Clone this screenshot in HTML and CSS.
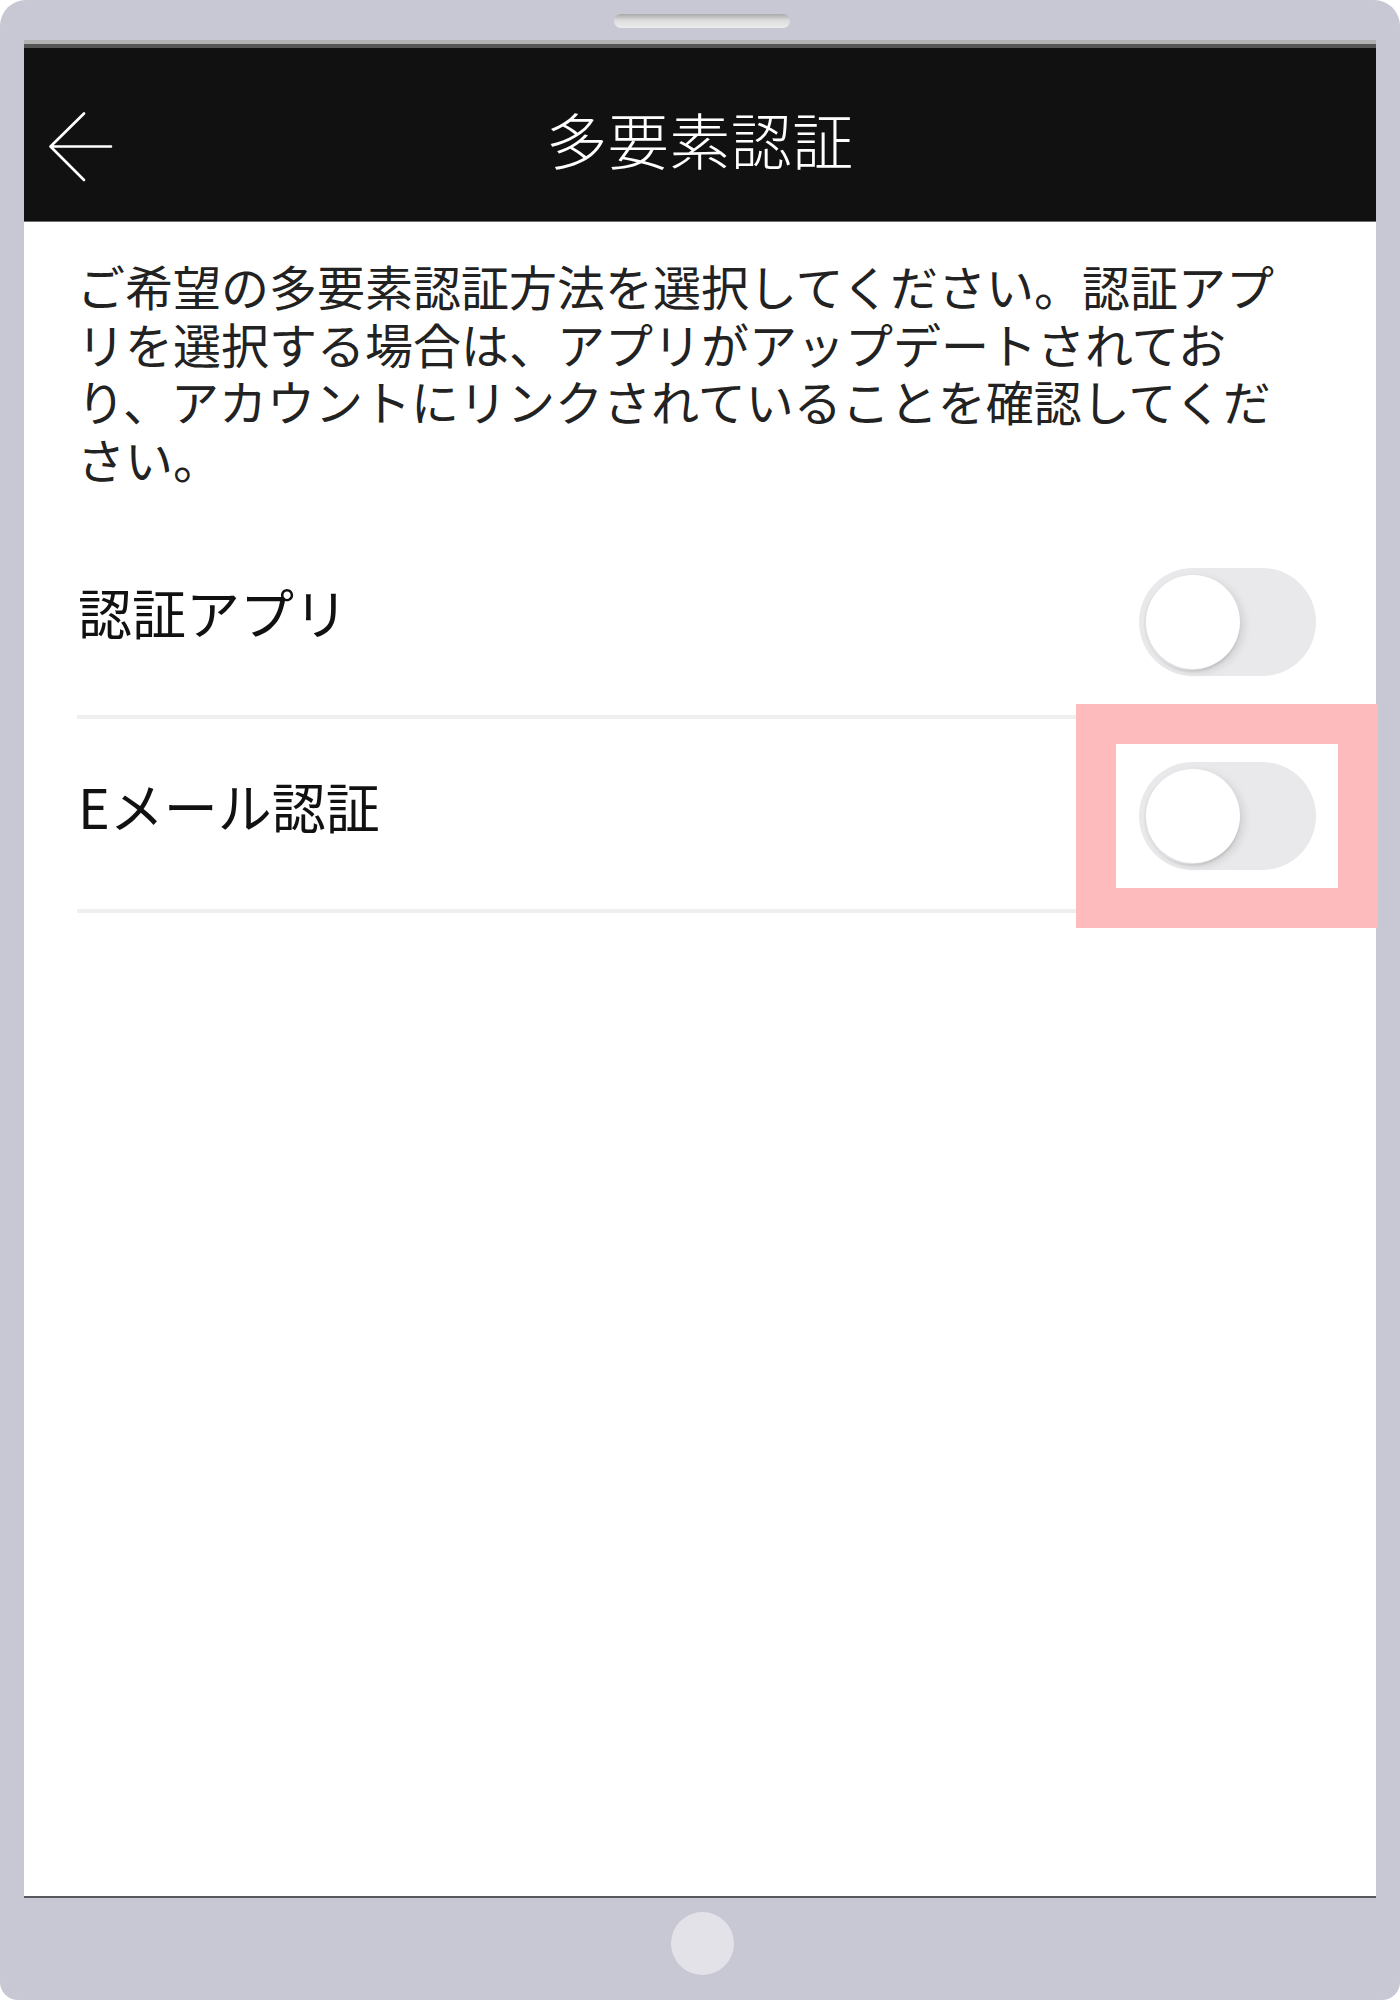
FILE: index.html
```html
<!DOCTYPE html>
<html lang="ja">
<head>
  <meta charset="UTF-8" />
  <meta name="viewport" content="width=device-width, initial-scale=1.0" />
  <title>多要素認証</title>
  <link rel="stylesheet" href="styles.css">
</head>
<body>
  <div class="device">
    <!-- 上部ベゼル：スピーカー -->
    <div class="bezel-top">
      <div class="speaker"></div>
    </div>

    <div class="screen">
      <header class="app-bar">
        <button class="back-btn" aria-label="戻る">
          <svg width="64" height="72" viewBox="0 0 64 72">
            <path d="M1.5 34.5 H62 M35 1.5 L1.5 34.5 L35 68" fill="none" stroke="#fff" stroke-width="2.6" stroke-linecap="round" stroke-linejoin="round" />
          </svg>
        </button>
        <h1>多要素認証</h1>
        <span></span>
      </header>

      <div class="content">
        <p class="intro">ご希望の多要素認証方法を選択してください。認証アプリを選択する場合は、アプリがアップデートされており、アカウントにリンクされていることを確認してください。</p>

        <ul class="options">
          <li class="option">
            <span class="label">認証アプリ</span>
            <span class="switch"><span class="knob"></span></span>
          </li>
          <li class="option">
            <span class="label">Eメール認証</span>
            <span class="switch">
              <span class="knob"></span>
              <!-- 強調枠 -->
              <span class="highlight"></span>
            </span>
          </li>
        </ul>
      </div>
    </div>

    <!-- 下部ベゼル：ホームボタン -->
    <div class="bezel-bottom">
      <div class="home-btn"></div>
    </div>
  </div>
</body>
</html>
```

FILE: styles.css
```css
body {
  margin: 0;
  padding: 0;
  font-family: "Noto Sans CJK JP", "Noto Sans", sans-serif;
  background: #fff;
}
.device {
  width: 1400px;
  height: 2000px;
  background: #c8c8d5;
  border-radius: 26px 26px 18px 18px;
  display: flex;
  flex-direction: column;
  box-sizing: border-box;
  padding: 0 24px;
}
.bezel-top {
  height: 40px;
  display: flex;
  justify-content: center;
  padding-top: 14px;
  box-sizing: border-box;
}
.speaker {
  width: 176px;
  height: 14px;
  border-radius: 7px;
  background: linear-gradient(#a9a9a9, #dcdcdc 45%, #ececec);
  margin-left: 4px;
}
.screen {
  height: 1858px;
  background: #fff;
  border-top: 4px solid #b2b2b2;
  border-bottom: 2px solid #58585d;
  box-sizing: border-box;
  display: flex;
  flex-direction: column;
}
.app-bar {
  height: 178px;
  background: #111;
  border-top: 4px solid #555;
  border-bottom: 1px solid #6e6e6e;
  box-sizing: border-box;
  display: grid;
  grid-template-columns: 1fr auto 1fr;
  align-items: center;
  padding-top: 9px;
}
.back-btn {
  justify-self: start;
  margin-left: 25px;
  margin-top: 17px;
  padding: 0;
  border: none;
  background: none;
  display: flex;
}
.app-bar h1 {
  margin: 0;
  color: #fff;
  font-size: 61px;
  font-weight: 300;
  line-height: 1.45;
  letter-spacing: 0.5px;
}
.content {
  padding: 0 60px 0 53px;
}
.intro {
  margin: 0;
  padding-top: 35px;
  font-size: 48px;
  line-height: 57.6px;
  color: #222;
}
.options {
  list-style: none;
  margin: 38px 0 0;
  padding: 0;
}
.option {
  height: 194px;
  box-sizing: border-box;
  border-bottom: 4px solid #efefef;
  display: flex;
  justify-content: space-between;
  align-items: center;
}
.label {
  font-size: 54px;
  color: #111;
  padding: 0 0 17px 1px;
}
.switch {
  position: relative;
  width: 177px;
  height: 108px;
  border-radius: 54px;
  background: #e9e9eb;
  box-sizing: border-box;
  padding: 7px;
  margin-top: 4px;
  display: flex;
}
.knob {
  width: 94px;
  height: 94px;
  border-radius: 50%;
  background: #fff;
  box-shadow: -2px 1px 0 #e0e0e2, 0 3px 2px rgba(0,0,0,0.08), 4px 3px 8px rgba(0,0,0,0.10);
}
.highlight {
  position: absolute;
  top: -58px;
  bottom: -58px;
  left: -63px;
  right: -62px;
  border: 40px solid #fdbbbe;
}
.bezel-bottom {
  flex: 1;
  display: flex;
  justify-content: center;
  padding-top: 14px;
}
.home-btn {
  width: 63px;
  height: 63px;
  border-radius: 50%;
  background: #e2e2e8;
  margin-left: 4px;
}
```
